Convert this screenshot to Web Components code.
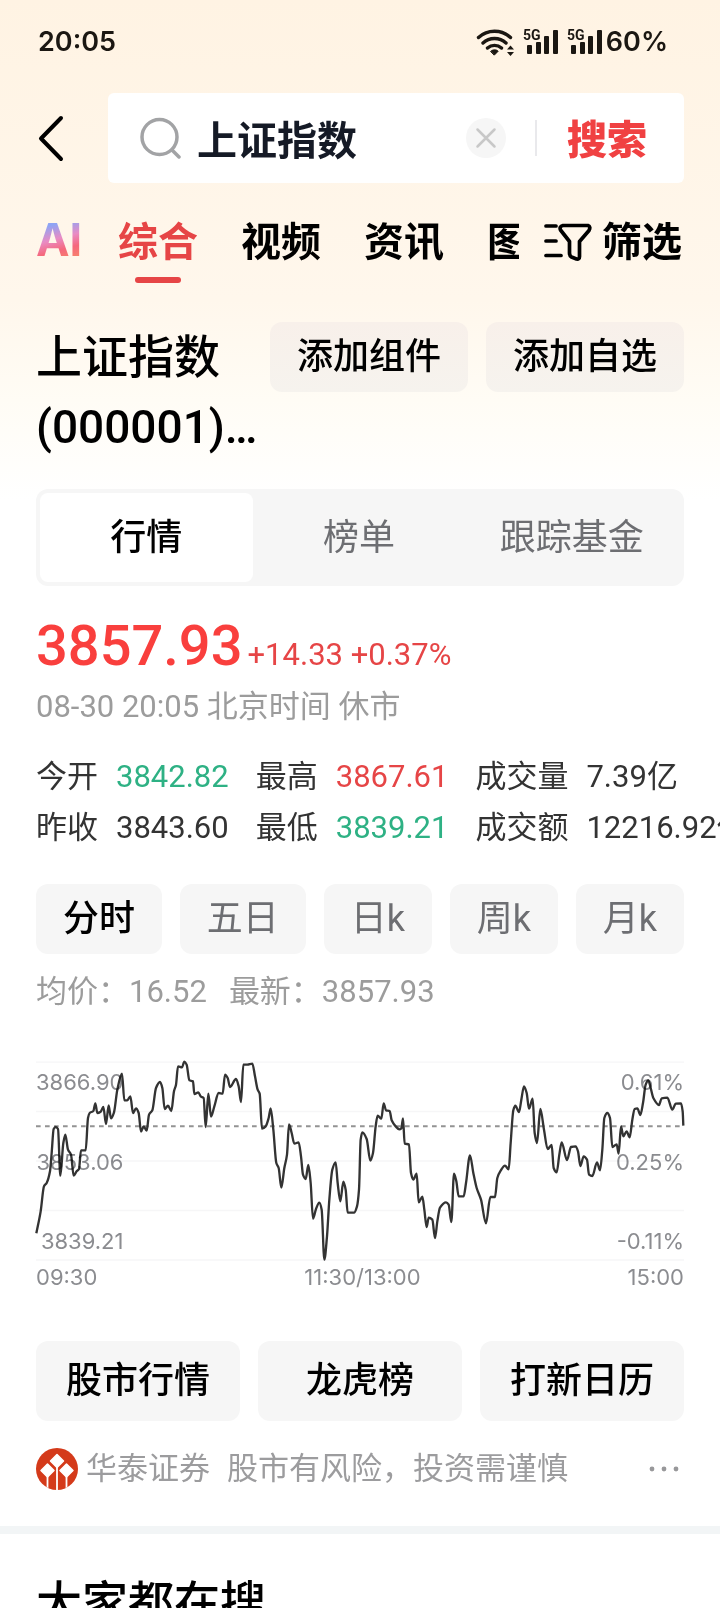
<!DOCTYPE html>
<html lang="zh-CN">
<head>
<meta charset="utf-8">
<meta name="viewport" content="width=device-width, initial-scale=1">
<title>上证指数 - 搜索</title>
<style>
  html, body { margin: 0; height: 100%; }
  body {
    font-family: Roboto, "Noto Sans CJK SC", sans-serif;
    color: #000;
    background: #fff;
    --red: #e64546;
    --green: #2eb184;
    --muted: #9c9c9c;
    --panel: #f6f6f6;
    --edge: 36px;
  }
</style>
</head>
<body>
<stock-page></stock-page>
<script>
const RESET = `
  * { box-sizing: border-box; }
  button, input { font: inherit; color: inherit; border: 0; padding: 0; margin: 0; background: none; outline: 0; }
  a { color: inherit; text-decoration: none; }
  svg { display: block; flex: none; }
`;

function define(name, css, html, ready) {
  const template = document.createElement('template');
  template.innerHTML = `<style>${RESET}${css}</style>${html}`;
  customElements.define(name, class extends HTMLElement {
    constructor() {
      super();
      this.attachShadow({ mode: 'open' }).append(template.content.cloneNode(true));
      if (ready) ready(this.shadowRoot, this);
    }
  });
}

define('signal-bars', `
  :host { display: block; }
  text { font: 700 14px Roboto, sans-serif; }
`, `
  <svg width="36" height="28" viewBox="0 0 36 28" fill="#1b1712" aria-label="5G 信号">
    <text x="0" y="12">5G</text>
    <rect x="4" y="17" width="5" height="9" rx="1"/>
    <rect x="13" y="14" width="5" height="12" rx="1"/>
    <rect x="21" y="8" width="5" height="18" rx="1"/>
    <rect x="30" y="2" width="5" height="24" rx="1"/>
  </svg>
`);

define('status-bar', `
  :host {
    display: flex; align-items: center; justify-content: space-between;
    height: 82px; padding: 2px 52px 0 38px;
    font: 600 27px/32px Inter, sans-serif; color: #1b1712;
  }
  .right { display: flex; align-items: center; gap: 8px; }
  .level { margin-left: -5px; }
`, `
  <span>20:05</span>
  <div class="right">
    <svg width="39" height="28" viewBox="0 0 39 28" fill="none" stroke="#1b1712" stroke-width="3.4" stroke-linecap="round" aria-label="Wi-Fi">
      <path d="M2.500 9.500a23.500 23.500 0 0 1 32 0M7 15a17 17 0 0 1 23 0M11.500 20a10.500 10.500 0 0 1 14 0"/>
      <path d="M14.800 23.200a5.500 5.500 0 0 1 7.400 0l-3.700 3.700z" fill="#1b1712" stroke-width="1"/>
      <path d="M31 21.500l3.500-4 3.500 4zM31 24l3.500 4 3.500-4z" fill="#1b1712" stroke="none"/>
    </svg>
    <signal-bars></signal-bars>
    <signal-bars></signal-bars>
    <span class="level">60%</span>
  </div>
`);

define('search-header', `
  :host { display: flex; align-items: center; padding: 11px var(--edge) 0; }
  .back { display: flex; width: 72px; height: 90px; align-items: center; flex: none; }
  form {
    flex: 1; min-width: 0; display: flex; align-items: center; height: 90px;
    padding: 0 37px 0 31px; background: #fff; border-radius: 6px;
  }
  input { flex: 1; min-width: 0; height: 60px; margin-left: 16px; font-size: 40px; font-weight: 700; color: #151a26; }
  .divider { width: 2px; height: 36px; margin: 0 30px 0 29px; background: #e9e9ec; }
  .go { padding-top: 6px; font-size: 40px; line-height: 60px; font-weight: 900; color: #f04142; }
`, `
  <button class="back" aria-label="返回">
    <svg width="30" height="48" viewBox="0 0 30 48" fill="none" stroke="#000" stroke-width="4" stroke-linecap="round" stroke-linejoin="round"><path d="M25 4L5 24.500 25 45"/></svg>
  </button>
  <form onsubmit="return false">
    <svg width="42" height="44" viewBox="0 0 42 44" fill="none" stroke="#a2a3a5" stroke-width="3.500" stroke-linecap="round"><circle cx="20.500" cy="21" r="17.500"/><path d="M33 34l7 7"/></svg>
    <input type="text" value="上证指数" aria-label="搜索内容">
    <button type="button" aria-label="清除">
      <svg width="40" height="40" viewBox="0 0 40 40"><circle cx="20" cy="20" r="20" fill="#f6f6f6"/><path d="M11.500 11.500l17 17m0-17l-17 17" fill="none" stroke="#c8c8c8" stroke-width="2.500" stroke-linecap="round"/></svg>
    </button>
    <span class="divider"></span>
    <button class="go">搜索</button>
  </form>
`);

define('search-tabs', `
  :host { display: flex; padding: 34px var(--edge) 0; font-size: 40px; line-height: 52px; font-weight: 700; }
  nav { flex: 1; min-width: 0; display: flex; gap: 43px; overflow: hidden; white-space: nowrap; height: 66px; }
  nav a { flex: none; }
  .ai {
    width: 48px; height: 48px; margin-right: -9px; font: 700 45px/46px Inter, sans-serif;
    background: linear-gradient(165deg, #8fa4f4 20%, #e98bc4 45%, #f5687c 65%, #f8836b 85%);
    -webkit-background-clip: text; background-clip: text; color: transparent;
  }
  .on { color: var(--red); display: flex; flex-direction: column; align-items: center; gap: 8px; }
  .on::after { content: ""; width: 46px; height: 6px; border-radius: 3px; background: var(--red); }
  button { display: flex; align-items: center; gap: 10px; height: 52px; margin-left: 25px; padding-right: 2px; line-height: 52px; font-weight: 700; }
`, `
  <nav>
    <a class="ai" href="#ai">AI</a>
    <a class="on" href="#all">综合</a>
    <a href="#video">视频</a>
    <a href="#news">资讯</a>
    <a href="#image">图片</a>
  </nav>
  <button>
    <svg width="48" height="40" viewBox="0 0 48 40" fill="none" stroke="#000" stroke-width="3.700" stroke-linecap="round" stroke-linejoin="round">
      <path d="M2 3h10M2 18h10M2 32.500h15"/>
      <path d="M19 2.500h25q3 1 1 5l-9.500 11v15q0 3-3 2.500l-5-2q-2-1-2-4V18.500L16.500 7q-1.500-3.500 2.500-4.500z"/>
    </svg>
    <span>筛选</span>
  </button>
`);

define('stock-title', `
  :host { display: flex; align-items: flex-start; gap: 18px; padding: 39px var(--edge) 0; }
  h1 { flex: 1; min-width: 0; margin: 0; font-size: 46px; line-height: 70px; font-weight: 500; white-space: nowrap; }
  button { flex: none; width: 198px; height: 70px; border-radius: 12px; font-size: 36px; line-height: 52px; font-weight: 500; background: linear-gradient(#f8f0ea, #f6f3ee); }
`, `
  <h1>上证指数<br>(000001)…</h1>
  <button>添加组件</button>
  <button>添加自选</button>
`);

define('segment-tabs', `
  :host { display: flex; margin: 27px var(--edge) 0; padding: 4px 6px 4px 4px; border-radius: 12px; background: var(--panel); }
  button { flex: 1; height: 89px; border-radius: 8px; font-size: 36px; line-height: 52px; color: #6d6e72; }
  .on { background: #fff; color: #000; font-weight: 500; }
`, `
  <button class="on">行情</button>
  <button>榜单</button>
  <button>跟踪基金</button>
`);

define('quote-summary', `
  :host { display: block; padding: 26px 0 0 var(--edge); font-size: 31px; color: #333; white-space: nowrap; }
  .price { display: flex; align-items: baseline; gap: 5px; color: var(--red); }
  .price strong { font-size: 56px; line-height: 68px; font-weight: 500; color: #f93f3d; }
  .price span { line-height: 32px; }
  .time { line-height: 40px; margin: 7px 0 24px; color: var(--muted); }
  table { border-collapse: collapse; }
  tr { height: 51px; }
  th, td { padding: 0; font-weight: 400; text-align: left; line-height: 51px; }
  th { padding-right: 18px; }
  td { padding-right: 27px; }
  .up { color: var(--red); }
  .down { color: var(--green); }
`, `
  <div class="price"><strong>3857.93</strong><span>+14.33 +0.37%</span></div>
  <div class="time">08-30 20:05 北京时间 休市</div>
  <table>
    <tr><th scope="row">今开</th><td class="down">3842.82</td><th scope="row">最高</th><td class="up">3867.61</td><th scope="row">成交量</th><td>7.39亿</td></tr>
    <tr><th scope="row">昨收</th><td>3843.60</td><th scope="row">最低</th><td class="down">3839.21</td><th scope="row">成交额</th><td>12216.92亿</td></tr>
  </table>
`);

define('period-tabs', `
  :host { display: flex; justify-content: space-between; padding: 31px var(--edge) 0; }
  button { height: 70px; padding: 0 27px; border-radius: 12px; background: var(--panel); font-size: 36px; line-height: 52px; color: #6d6e72; }
  .on { color: #000; font-weight: 500; }
`, `
  <button class="on">分时</button>
  <button>五日</button>
  <button>日k</button>
  <button>周k</button>
  <button>月k</button>
`);

/* Samples of the day: x runs 108..2052, y runs 67 (3866.90) .. 661 (3839.21). */
const SAMPLES = `109,581 122,515 132,440 140,430 150,395 155,340 161,268 167,262 174,268 181,408 190,310 196,285 204,330 213,345 221,408 230,395 237,388 243,332 257,332 264,235 269,220 280,214 286,191 292,220 302,216 310,202 318,253 326,197 333,236 342,218 352,150 366,102 373,182 382,182 391,170 399,220 408,206 416,220 423,276 431,260 440,273 447,225 457,212 468,145 480,127 487,145 494,208 504,198 514,214 522,155 528,135 534,80 546,83 553,66 560,75 568,122 579,125 583,163 595,158 602,170 611,175 617,262 625,162 633,231 643,200 656,160 668,162 675,105 683,115 690,142 708,118 716,140 723,187 730,75 742,75 757,72 765,110 773,150 779,162 786,267 797,260 806,235 812,206 820,270 829,370 836,385 844,444 853,385 861,345 867,254 875,280 883,312 896,308 903,350 909,405 917,418 925,376 932,430 939,537 948,508 958,489 965,510 973,660 981,590 988,480 997,390 1007,368 1013,430 1021,485 1030,426 1037,450 1043,519 1062,519 1071,500 1077,450 1082,300 1087,278 1100,298 1111,363 1119,340 1127,260 1133,228 1144,237 1151,191 1158,212 1169,214 1175,242 1187,260 1198,269 1204,266 1209,236 1214,312 1227,314 1233,400 1240,420 1250,402 1256,488 1267,471 1273,510 1280,562 1286,534 1297,540 1305,595 1312,545 1320,504 1338,488 1346,495 1354,547 1362,402 1369,425 1376,470 1391,470 1398,430 1410,347 1420,400 1430,445 1443,480 1458,551 1471,472 1485,472 1492,415 1502,393 1515,378 1526,389 1532,310 1540,212 1546,198 1557,217 1564,180 1572,140 1580,160 1587,207 1598,177 1604,280 1611,310 1621,208 1632,270 1643,328 1655,316 1661,385 1670,398 1678,345 1685,308 1701,361 1713,322 1727,320 1734,335 1741,379 1751,350 1761,360 1767,405 1777,409 1791,368 1800,392 1807,330 1813,235 1822,220 1830,235 1837,322 1850,314 1856,342 1863,260 1870,290 1880,275 1889,293 1897,240 1904,208 1912,206 1921,226 1929,190 1937,135 1945,122 1952,145 1960,175 1977,196 1985,176 2002,174 2017,210 2027,192 2043,191 2048,215 2050,258`
  .split(' ').map(p => p.split(',').map(Number));

/* Monotone cubic through the samples, so that peaks stay peaks. */
function smooth(points) {
  const n = points.length;
  const slope = i => (points[i + 1][1] - points[i][1]) / (points[i + 1][0] - points[i][0]);
  const tangent = points.map((p, i) => {
    if (i === 0) return slope(0);
    if (i === n - 1) return slope(n - 2);
    const a = slope(i - 1), b = slope(i);
    return a * b <= 0 ? 0 : 2 * a * b / (a + b);
  });
  let d = `M${points[0]}`;
  for (let i = 0; i < n - 1; i++) {
    const [x0, y0] = points[i], [x1, y1] = points[i + 1], h = (x1 - x0) / 3;
    d += `C${x0 + h} ${y0 + h * tangent[i]} ${x1 - h} ${y1 - h * tangent[i + 1]} ${x1} ${y1}`;
  }
  return d;
}

define('intraday-chart', `
  :host { display: block; padding: 16px var(--edge) 0; color: var(--muted); }
  .legend { display: flex; gap: 22px; font-size: 31px; line-height: 44px; }
  .plot { display: grid; margin-top: 48px; }
  .plot > * { grid-area: 1 / 1; }
  .plot svg { width: 100%; height: auto; overflow: visible; mix-blend-mode: multiply; }
  .scale { display: flex; flex-direction: column; justify-content: space-between; padding: 6px 0 5px; text-align: right; }
  .low { justify-self: start; }
  .high { justify-self: end; }
  .scale, .times { font: 400 22px/28px Inter, sans-serif; color: #8b8c90; }
  .times { display: flex; justify-content: space-between; margin-top: 3px; }
`, `
  <div class="legend"><span>均价：16.52</span><span>最新：3857.93</span></div>
  <div class="plot">
    <div class="scale low"><span>3866.90</span><span>3853.06</span><span>3839.21</span></div>
    <div class="scale high"><span>0.61%</span><span>0.25%</span><span>-0.11%</span></div>
    <svg viewBox="108 67 1944 594" fill="none" aria-label="分时走势">
      <path d="M108 67.500H2052M108 215.500H2052M108 364H2052M108 512.500H2052M108 661H2052" stroke="#f6f6f7" stroke-width="4"/>
      <path d="M108 260H2052" stroke="#939393" stroke-width="6" stroke-dasharray="14 13"/>
      <path class="line" stroke="#333" stroke-width="7" stroke-linejoin="round"/>
    </svg>
  </div>
  <div class="times"><span>09:30</span><span>11:30/13:00</span><span>15:00</span></div>
`, root => root.querySelector('.line').setAttribute('d', smooth(SAMPLES)));

define('quick-links', `
  :host { display: flex; gap: 18px; padding: 50px var(--edge) 0; }
  a { flex: 1; border-radius: 12px; background: var(--panel); font-size: 36px; line-height: 80px; font-weight: 500; text-align: center; }
`, `
  <a href="#market">股市行情</a>
  <a href="#ranking">龙虎榜</a>
  <a href="#ipo">打新日历</a>
`);

define('source-note', `
  :host { display: flex; align-items: center; padding: 27px var(--edge) 36px; font-size: 31px; line-height: 42px; color: #9c9c9e; white-space: nowrap; }
  .name { margin: 0 17px 0 8px; }
  button { margin-left: auto; padding: 0 5px; height: 42px; }
`, `
  <svg width="42" height="42" viewBox="0 0 42 42" aria-hidden="true">
    <defs><clipPath id="disc"><circle cx="21" cy="21" r="21"/></clipPath></defs>
    <g clip-path="url(#disc)">
      <rect width="42" height="42" fill="#d43a1a"/>
      <path d="M21 6.500l6.500 6.500-6.500 6.500-6.500-6.500zM11.500 16l6.500 6.500-6.500 6.500L5 22.500zM30.500 16l6.500 6.500-6.500 6.500-6.500-6.500z" fill="#fff" stroke="#fff" stroke-width="1.500" stroke-linejoin="round"/>
      <path d="M21 19v23M11.500 28v14M30.500 28v14" stroke="#fff" stroke-width="1.800"/>
    </g>
  </svg>
  <span class="name">华泰证券</span>
  <span>股市有风险，投资需谨慎</span>
  <button aria-label="更多">
    <svg width="30" height="6" viewBox="0 0 30 6" fill="#98989a"><circle cx="3" cy="3" r="2.400"/><circle cx="15" cy="3" r="2.400"/><circle cx="27" cy="3" r="2.400"/></svg>
  </button>
`);

define('related-searches', `
  :host { display: block; border-top: 8px solid #f2f5f6; padding: 34px var(--edge) 0; }
  h2 { margin: 0; font-size: 46px; line-height: 70px; font-weight: 500; }
`, `<h2>大家都在搜</h2>`);

define('stock-page', `
  :host {
    display: block; height: 100vh; overflow: hidden auto; scrollbar-width: none;
    background: linear-gradient(#fff3e3 0, #fff7ec 300px, #fffcf5 400px, #fff 500px) no-repeat #fff;
  }
`, `
  <status-bar></status-bar>
  <search-header></search-header>
  <search-tabs></search-tabs>
  <stock-title></stock-title>
  <segment-tabs></segment-tabs>
  <quote-summary></quote-summary>
  <period-tabs></period-tabs>
  <intraday-chart></intraday-chart>
  <quick-links></quick-links>
  <source-note></source-note>
  <related-searches></related-searches>
`);
</script>
</body>
</html>
